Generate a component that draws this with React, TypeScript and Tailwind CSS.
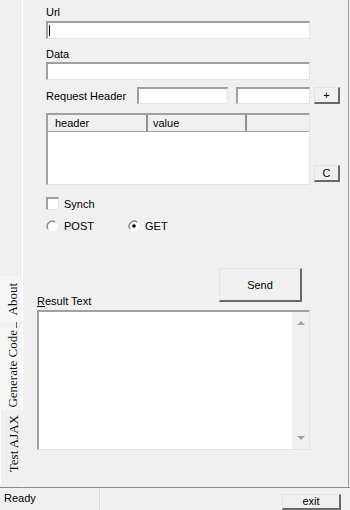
import React from "react";

const sunken =
  "bg-white border-t-2 border-l-2 border-b border-r border-t-[#a0a0a0] border-l-[#a0a0a0] border-b-[#e3e3e3] border-r-[#e3e3e3]";
const raised =
  "bg-[#f0f0f0] border-t border-l border-b-2 border-r-2 border-t-[#e3e3e3] border-l-[#e3e3e3] border-b-[#696969] border-r-[#696969] flex items-center justify-center";

function Radio({ checked }: { checked?: boolean }) {
  return (
    <svg width="12" height="12" viewBox="0 0 12 12" className="shrink-0">
      <circle cx="6" cy="6" r="5" fill="#fff" />
      <path d="M2.2 9.2 A5 5 0 0 1 9.2 2.2" fill="none" stroke="#8a8a8a" strokeWidth="1.4" />
      <path d="M9.8 2.8 A5 5 0 0 1 2.8 9.8" fill="none" stroke="#ffffff" strokeWidth="1.2" />
      {checked && <circle cx="6" cy="6" r="1.8" fill="#000" />}
    </svg>
  );
}

function Tab({ label, h }: { label: string; h: string }) {
  return (
    <div className={h + " flex items-center justify-center pl-[2px] border-r border-r-white bg-[#f6f6f6]"}>
      <span className="[writing-mode:vertical-rl] rotate-180 font-['Liberation_Serif',serif] text-[13px] leading-[13px] whitespace-nowrap text-[#111]">
        {label}
      </span>
    </div>
  );
}

export default function App() {
  return (
    <div className="w-[350px] h-[510px] bg-[#f0f0f0] flex flex-col overflow-hidden text-black font-['Liberation_Sans',Arial,sans-serif] text-[11px] leading-[14px]">
      <div className="flex h-[487px]">
        {/* tab strip */}
        <div className="w-[23px] flex flex-col">
          <div className="flex-1 border-r border-r-white" />
          <Tab label="About" h="h-[46px]" />
          <div className="h-[6px] border-r border-r-white flex justify-end pr-[5px]">
            <div className="w-px h-full bg-[#666]" />
          </div>
          <Tab label="Generate Code" h="h-[82px]" />
          <div className="h-[74px] flex items-start justify-center pt-[3px] pl-[2px] bg-[#f0f0f0] border-l border-l-white">
            <span className="[writing-mode:vertical-rl] rotate-180 font-['Liberation_Serif',serif] text-[13px] leading-[13px] whitespace-nowrap pb-[2px] text-[#111]">
              Test AJAX
            </span>
          </div>
          <div className="h-[3px] border-r border-r-white" />
        </div>

        {/* panel */}
        <div className="w-[326px] border-r border-r-[#9a9a9a] flex flex-col pt-[5px]">
          <div className="pl-[23px] flex flex-col">
            <div className="h-[14px]">Url</div>
            <div className={sunken + " mt-[2px] w-[264px] h-[18px] relative"}>
              <div className="absolute left-[1px] top-[2px] w-px h-[11px] bg-black" />
            </div>
            <div className="h-[14px] mt-[8px]">Data</div>
            <div className={sunken + " mt-[1px] w-[264px] h-[18px]"} />

            <div className="mt-[7px] h-[17px] flex items-center">
              <div className="w-[91px]">Request Header</div>
              <div className={sunken + " w-[91px] h-[17px]"} />
              <div className={sunken + " ml-[8px] w-[74px] h-[17px]"} />
              <div className={raised + " ml-[4px] w-[26px] h-[17px] text-[11px]"}>+</div>
            </div>

            <div className="mt-[9px] flex items-end">
              <div className={sunken + " w-[264px] h-[72px] flex flex-col"}>
                <div className="h-[17px] flex bg-[#f0f0f0] border-b border-b-[#a0a0a0]">
                  <div className="w-[100px] pl-[7px] border-r-2 border-r-[#909090] leading-[16px]">header</div>
                  <div className="w-[99px] pl-[5px] border-r-2 border-r-[#909090] leading-[16px]">value</div>
                  <div className="flex-1" />
                </div>
              </div>
              <div className={raised + " ml-[4px] mb-[3px] w-[26px] h-[17px]"}>C</div>
            </div>

            <div className="mt-[12px] h-[13px] flex items-center">
              <div className={sunken + " w-[13px] h-[13px]"} />
              <span className="ml-[5px]">Synch</span>
            </div>

            <div className="mt-[9px] h-[14px] flex items-center">
              <Radio />
              <span className="ml-[6px] w-[64px]">POST</span>
              <Radio checked />
              <span className="ml-[5px]">GET</span>
            </div>
          </div>

          <div className="mt-[35px] pl-[14px] flex items-end">
            <div className="h-[14px] w-[182px]">
              <span className="underline underline-offset-1">R</span>esult Text
            </div>
            <div className={raised + " mb-[6px] w-[83px] h-[34px]"}>Send</div>
          </div>

          <div className="pl-[14px] mt-[2px]">
            <div className={sunken + " w-[273px] h-[140px] flex justify-end"}>
              <div className="w-[17px] h-full bg-[#f0f0f0] flex flex-col items-center justify-between py-[8px]">
                <svg width="8" height="5" viewBox="0 0 8 5">
                  <path d="M0 5 L4 1 L8 5 Z" fill="#a3a3a3" />
                </svg>
                <svg width="8" height="5" viewBox="0 0 8 5">
                  <path d="M0 0 L4 4 L8 0 Z" fill="#a3a3a3" />
                </svg>
              </div>
            </div>
          </div>
        </div>
      </div>

      {/* status bar */}
      <div className="h-[23px] border-t border-t-[#8c8c8c] flex">
        <div className="w-[100px] pl-[4px] pt-[3px] border-r border-r-[#dcdcdc]">Ready</div>
        <div className="flex-1 flex justify-end pr-[9px] pt-[6px]">
          <div className={raised + " w-[59px] h-[16px] leading-[13px]"}>exit</div>
        </div>
      </div>
    </div>
  );
}
